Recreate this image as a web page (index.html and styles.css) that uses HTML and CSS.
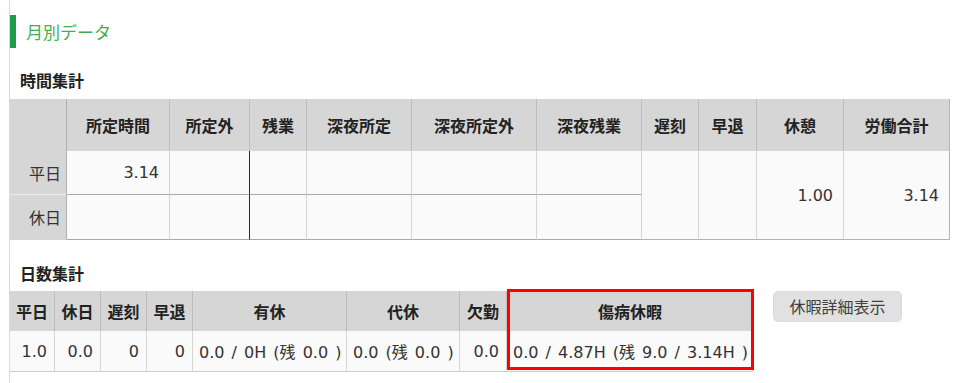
FILE: index.html
```html
<!DOCTYPE html>
<html lang="ja">
<head>
<meta charset="utf-8">
<title>月別データ</title>
<link rel="stylesheet" href="styles.css">
</head>
<body>
<div class="page">
  <h2 class="title">月別データ</h2>

  <h3 class="sub">時間集計</h3>
  <table class="t1">
    <colgroup>
      <col style="width:57px"><col style="width:103px"><col style="width:80px"><col style="width:57px">
      <col style="width:105px"><col style="width:125px"><col style="width:105px"><col style="width:57px">
      <col style="width:58px"><col style="width:87px"><col style="width:106px">
    </colgroup>
    <thead>
      <tr class="hrow">
        <th class="stub"></th>
        <th>所定時間</th>
        <th>所定外</th>
        <th>残業</th>
        <th>深夜所定</th>
        <th>深夜所定外</th>
        <th>深夜残業</th>
        <th>遅刻</th>
        <th>早退</th>
        <th>休憩</th>
        <th class="last">労働合計</th>
      </tr>
    </thead>
    <tbody>
      <tr class="r1">
        <th class="stub">平日</th>
        <td class="num">3.14</td>
        <td class="dark"></td>
        <td></td>
        <td></td>
        <td></td>
        <td></td>
        <td rowspan="2" class="span"></td>
        <td rowspan="2" class="span"></td>
        <td rowspan="2" class="span num">1.00</td>
        <td rowspan="2" class="span num last">3.14</td>
      </tr>
      <tr class="r2">
        <th class="stub">休日</th>
        <td></td>
        <td class="dark"></td>
        <td></td>
        <td></td>
        <td></td>
        <td></td>
      </tr>
    </tbody>
  </table>

  <h3 class="sub sub2">日数集計</h3>
  <div class="days">
    <table class="t2">
      <colgroup>
        <col style="width:45px"><col style="width:46px"><col style="width:46px"><col style="width:46px">
        <col style="width:154px"><col style="width:113px"><col style="width:47px"><col style="width:246px">
      </colgroup>
      <thead>
        <tr class="hrow">
          <th>平日</th>
          <th>休日</th>
          <th>遅刻</th>
          <th>早退</th>
          <th>有休</th>
          <th>代休</th>
          <th>欠勤</th>
          <th class="sick">傷病休暇</th>
        </tr>
      </thead>
      <tbody>
        <tr class="brow">
          <td class="num">1.0</td>
          <td class="num">0.0</td>
          <td class="num">0</td>
          <td class="num">0</td>
          <td class="txt">0.0 / 0H (残 0.0 )</td>
          <td class="txt">0.0 (残 0.0 )</td>
          <td class="num">0.0</td>
          <td class="txt">0.0 / 4.87H (残 9.0 / 3.14H )</td>
        </tr>
      </tbody>
    </table>
    <button class="btn" type="button">休暇詳細表示</button>
  </div>
</div>
</body>
</html>
```

FILE: styles.css
```css
* { box-sizing: border-box; }

html, body {
  margin: 0;
  padding: 0;
  background: #ffffff;
}

body {
  font-family: "DejaVu Sans", "Noto Sans CJK JP", sans-serif;
  font-size: 16px;
  color: #333333;
}

.page {
  margin-left: 9px;
  border-left: 1px solid #dcdcdc;
  min-height: 100vh;
  padding-top: 15px;
  width: 941px;
}

.title {
  margin: 0;
  height: 33px;
  line-height: 33px;
  border-left: 6px solid #1f9d4b;
  padding-left: 10px;
  font-size: 17px;
  font-weight: normal;
  color: #3fae50;
  font-family: "Noto Sans CJK JP", sans-serif;
}

.sub {
  margin: 20px 0 7px 0;
  padding-left: 10px;
  height: 24px;
  line-height: 24px;
  font-size: 16px;
  font-weight: bold;
  color: #222222;
  font-family: "Noto Sans CJK JP", sans-serif;
}

.sub2 {
  margin-top: 21px;
  margin-bottom: 6px;
}

table {
  border-collapse: separate;
  border-spacing: 0;
  table-layout: fixed;
}

th {
  font-family: "Noto Sans CJK JP", sans-serif;
  font-weight: bold;
  color: #222222;
  padding: 0;
}

td {
  padding: 0;
  white-space: nowrap;
}

/* time table */
.t1 {
  width: 940px;
}

.t1 thead th {
  background: #d5d6d5;
  border-right: 1px solid #bdbdbd;
  text-align: center;
  vertical-align: middle;
}

.t1 .hrow { height: 52px; }
.t1 .r1 { height: 44px; }
.t1 .r2 { height: 45px; }

.t1 tbody th.stub {
  background: #d5d6d5;
  font-weight: normal;
  color: #333333;
  text-align: right;
  padding-right: 5px;
  border-right: 1px solid #b0b0b0;
}

.t1 thead th.stub {
  border-right: 1px solid #b0b0b0;
}

.t1 .r1 th.stub { border-bottom: 1px solid #ececec; }
.t1 .r2 th.stub { border-bottom: 1px solid #d5d6d5; }

.t1 td {
  background: #fafafa;
  border-right: 1px solid #d6d6d6;
}

.t1 .r1 td { border-bottom: 1px solid #a9a9a9; }
.t1 .r2 td { border-bottom: 1px solid #a9a9a9; }
.t1 .r1 td.span { border-bottom: 1px solid #b4b4b4; }

.t1 td.dark { border-right: 1px solid #2b2b2b; }

.t1 .last { border-right: 1px solid #b4b4b4; }

.num {
  text-align: right;
  padding-right: 10px;
  color: #333333;
}

/* days table */
.days {
  display: flex;
  align-items: flex-start;
  gap: 20px;
}

.t2 {
  width: 743px;
}

.t2 .hrow { height: 40px; }
.t2 .brow { height: 41px; }

.t2 thead th {
  background: #d5d6d5;
  border-right: 1px solid #bdbdbd;
  text-align: center;
}

.t2 td {
  background: #fafafa;
  border-right: 1px solid #d6d6d6;
  border-bottom: 1px solid #cdcdcd;
  word-spacing: 2px;
}

.t2 td.num { padding-right: 7px; }
.t2 td.txt { padding-left: 6px; text-align: left; }

.t2 th.sick {
  position: relative;
  border-right: none;
}

.t2 th.sick::after {
  content: "";
  position: absolute;
  left: 0;
  right: -1px;
  top: -2px;
  bottom: -39px;
  border: 3px solid #ff0000;
  pointer-events: none;
  z-index: 2;
}

.btn {
  width: 129px;
  height: 31px;
  border: 1px solid #dadada;
  border-radius: 5px;
  background: #e1e1e1;
  color: #404040;
  font-family: "Noto Sans CJK JP", sans-serif;
  font-size: 16px;
  line-height: 29px;
  padding: 0;
}
```
